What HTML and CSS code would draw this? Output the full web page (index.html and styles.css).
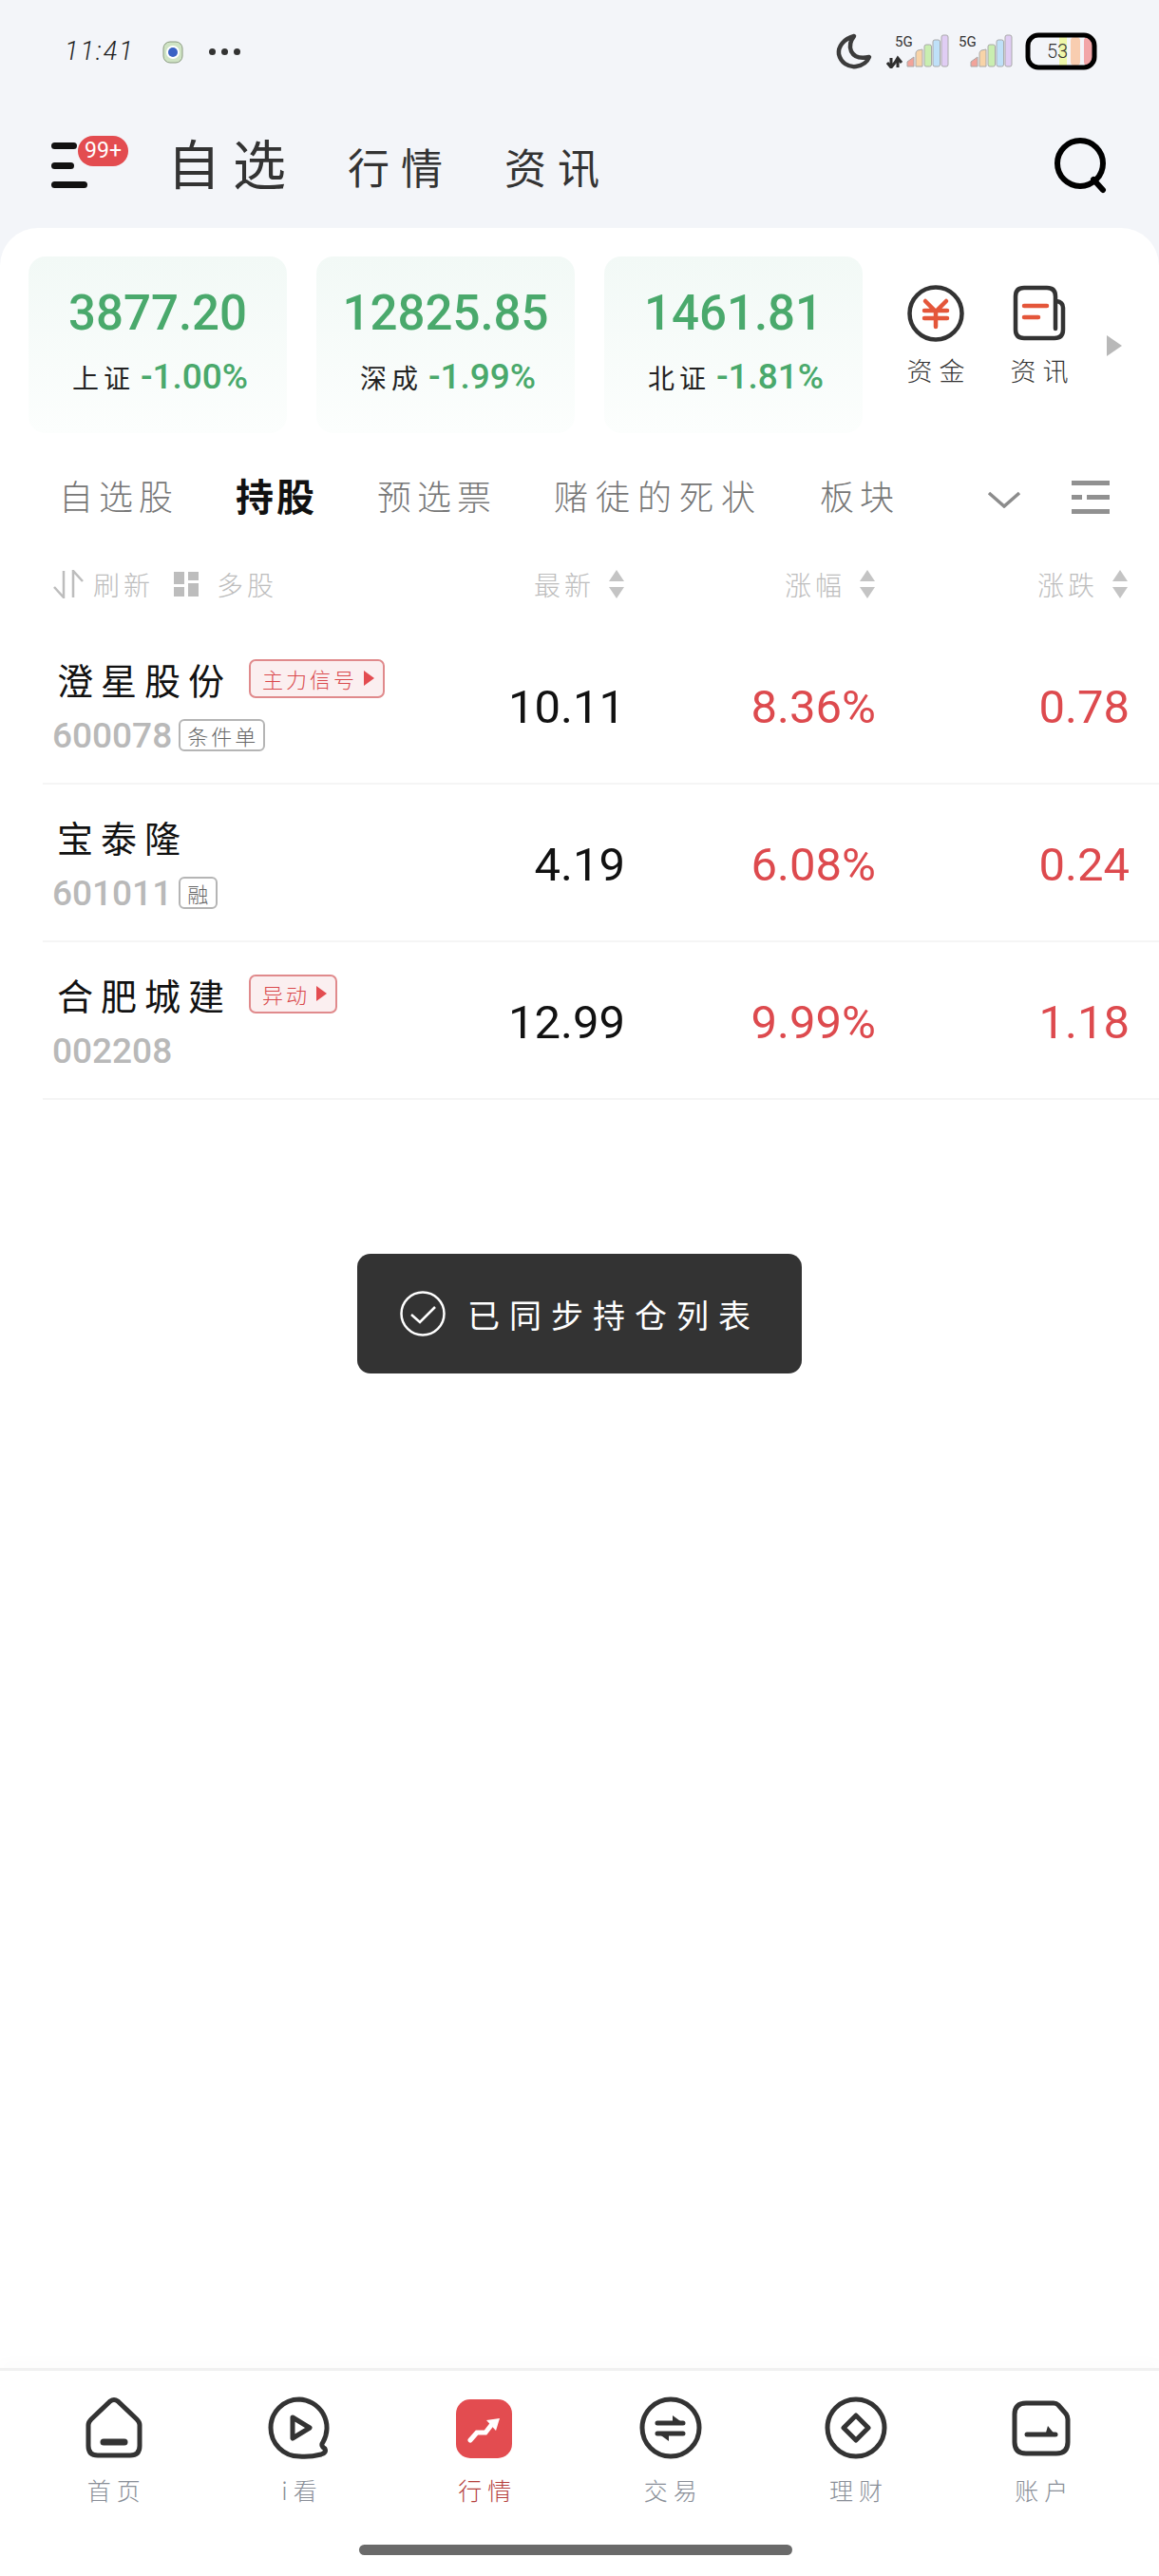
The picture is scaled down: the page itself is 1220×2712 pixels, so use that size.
FILE: index.html
```html
<!DOCTYPE html>
<html lang="zh-CN">
<head>
  <meta charset="UTF-8" />
  <meta name="viewport" content="width=device-width, initial-scale=1.0"/>
  <title>行情</title>
  <link rel="stylesheet" href="styles.css">
</head>
<body>

  <svg class="defs" width="0" height="0">
    <symbol id="sort" viewBox="0 0 18 30">
      <path d="M9 0 L17 12 H1 Z M1 18 H17 L9 30 Z" fill="#c4c4c4"/>
    </symbol>
    <symbol id="bars" viewBox="0 0 45 35">
      <g stroke="#a9a9a9" stroke-width="1">
        <path d="M1 34 V29 L8 24 V34 Z" fill="#f2a39a"/>
        <path d="M10 34 V20 Q10 18 12 17 L17 16 V34 Z" fill="#f8d4a8"/>
        <rect x="19" y="11" width="7.500" height="23" rx="2" fill="#c9eeb0"/>
        <rect x="28" y="6" width="7.500" height="28" rx="2" fill="#bfe0f8"/>
        <rect x="37" y="1" width="7" height="33" rx="2" fill="#e0cdf4"/>
      </g>
    </symbol>
  </svg>

  <div class="status">
    <span class="time">11:41</span>
    <svg class="app-dot" width="24" height="26" viewBox="0 0 24 26">
      <rect x="2" y="3" width="20" height="22" rx="7" fill="#cfe3c4" stroke="#8a9a80"/>
      <circle cx="12" cy="14" r="7" fill="#fff"/>
      <circle cx="12" cy="14" r="5" fill="#3a62c4"/>
    </svg>
    <span class="dots"><i></i><i></i><i></i></span>
    <div class="status-right">
      <svg width="40" height="40" viewBox="0 0 40 40">
        <path d="M20 4 C9 7 3 15 4 23 C6 32 14 37 22 36 C29 35 34 31 36 26 C27 28 20 26 17 20 C15 15 16 9 20 4 Z" fill="none" stroke="#3c3c3c" stroke-width="4.500" stroke-linejoin="round"/>
      </svg>
      <svg class="signal" width="66" height="36" viewBox="0 0 66 36">
        <text x="9" y="13" class="net">5G</text>
        <path d="M5 25 V35 M1 30 L5 35 L9 30 M12 35 V25 M9 30 L12 25 L16 30" stroke="#2f2f2f" stroke-width="3" fill="none"/>
        <use href="#bars" x="21" y="0" width="45" height="35"/>
      </svg>
      <svg class="signal" width="57" height="36" viewBox="0 0 57 36">
        <text x="0" y="13" class="net">5G</text>
        <use href="#bars" x="12" y="0" width="45" height="35"/>
      </svg>
      <svg class="battery" width="76" height="40" viewBox="0 0 76 40">
        <rect x="36" y="5" width="8" height="30" fill="#eef7a8"/>
        <rect x="48" y="5" width="10" height="30" rx="4" fill="#f8cdb0"/>
        <rect x="62" y="5" width="10" height="30" rx="4" fill="#f2a6a8"/>
        <text x="23" y="27" class="level">53</text>
        <rect x="3" y="3" width="70" height="34" rx="11" fill="none" stroke="#000" stroke-width="5"/>
      </svg>
    </div>
  </div>

  <div class="header">
    <div class="menu">
      <i class="menu-a"></i><i class="menu-b"></i><i class="menu-c"></i>
      <span class="badge">99+</span>
    </div>
    <span class="title active">自选</span>
    <span class="title">行情</span>
    <span class="title">资讯</span>
    <svg class="search" width="60" height="60" viewBox="0 0 60 60">
      <circle cx="29" cy="28" r="24" fill="none" stroke="#000" stroke-width="6"/>
      <path d="M43 45 L53 56" stroke="#000" stroke-width="6" stroke-linecap="round"/>
    </svg>
  </div>

  <div class="sheet">
    <div class="index-row">
      <div class="index-card">
        <div class="index-num">3877.20</div>
        <div class="index-chg"><span>上证</span>-1.00%</div>
      </div>
      <div class="index-card">
        <div class="index-num">12825.85</div>
        <div class="index-chg"><span>深成</span>-1.99%</div>
      </div>
      <div class="index-card">
        <div class="index-num">1461.81</div>
        <div class="index-chg"><span>北证</span>-1.81%</div>
      </div>
      <div class="shortcut first">
        <svg width="60" height="60" viewBox="0 0 60 60">
          <circle cx="30" cy="30" r="27.500" fill="none" stroke="#333" stroke-width="4.500"/>
          <path d="M19 17 L30 28 L41 17 M18 27 H42 M18 35 H42 M30 28 V44" fill="none" stroke="#e4563a" stroke-width="4.500" stroke-linecap="round"/>
        </svg>
        <span>资金</span>
      </div>
      <div class="shortcut">
        <svg width="56" height="60" viewBox="0 0 56 60">
          <path d="M45 46 V12 Q45 3 36 3 H12 Q3 3 3 12 V47 Q3 56 12 56 H44 Q53 56 53 47 V24 Q53 18 46 17" fill="none" stroke="#333" stroke-width="4.500" stroke-linecap="round"/>
          <path d="M12 22 H36 M12 34 H27" stroke="#e4563a" stroke-width="4.500" stroke-linecap="round"/>
        </svg>
        <span>资讯</span>
      </div>
      <i class="more-arrow"></i>
    </div>

    <div class="tabs">
      <span class="tab">自选股</span>
      <span class="tab current">持股</span>
      <span class="tab">预选票</span>
      <span class="tab long">赌徒的死状</span>
      <span class="tab">板块</span>
      <svg class="chevron" width="36" height="18" viewBox="0 0 36 18">
        <path d="M2 2 L18 16 L34 2" fill="none" stroke="#8c8c8c" stroke-width="3.500"/>
      </svg>
      <div class="tab-list"><i></i><i class="split"></i><i></i></div>
    </div>

    <div class="table-head">
      <div class="head-tools">
        <svg width="34" height="30" viewBox="0 0 34 30">
          <path d="M12 1 V29 L2 18 M22 29 V1 L32 12" fill="none" stroke="#bdbdbd" stroke-width="2.500"/>
        </svg>
        <span class="head-refresh">刷新</span>
        <svg class="head-grid" width="28" height="28" viewBox="0 0 28 28">
          <path d="M1 1 H12 V14 H1 Z M16 1 H27 V10 H16 Z M1 17 H12 V27 H1 Z M16 13 H27 V27 H16 Z" fill="#bdbdbd"/>
        </svg>
        <span>多股</span>
      </div>
      <div class="head-col">最新<svg width="18" height="30"><use href="#sort"/></svg></div>
      <div class="head-col">涨幅<svg width="18" height="30"><use href="#sort"/></svg></div>
      <div class="head-col">涨跌<svg width="18" height="30"><use href="#sort"/></svg></div>
    </div>

    <div class="stock">
      <div class="stock-info">
        <div class="stock-name">澄星股份<span class="signal-tag">主力信号</span></div>
        <div class="stock-code">600078<span class="code-tag">条件单</span></div>
      </div>
      <div class="val">10.11</div>
      <div class="val up">8.36%</div>
      <div class="val up">0.78</div>
    </div>
    <div class="stock">
      <div class="stock-info">
        <div class="stock-name">宝泰隆</div>
        <div class="stock-code">601011<span class="code-tag">融</span></div>
      </div>
      <div class="val">4.19</div>
      <div class="val up">6.08%</div>
      <div class="val up">0.24</div>
    </div>
    <div class="stock">
      <div class="stock-info">
        <div class="stock-name">合肥城建<span class="signal-tag">异动</span></div>
        <div class="stock-code">002208</div>
      </div>
      <div class="val">12.99</div>
      <div class="val up">9.99%</div>
      <div class="val up">1.18</div>
    </div>

    <div class="toast">
      <svg width="48" height="48" viewBox="0 0 48 48">
        <circle cx="24" cy="24" r="22.500" fill="none" stroke="#fff" stroke-width="2.500"/>
        <path d="M12 25 L21 33 L37 17" fill="none" stroke="#fff" stroke-width="2.500"/>
      </svg>
      <span>已同步持仓列表</span>
    </div>
  </div>

  <div class="tabbar">
    <div class="nav-items">
      <div class="nav-item">
        <svg width="60" height="64" viewBox="0 0 60 64">
          <path d="M3 29 Q3 26 6 23 L26 4 Q30 1 34 4 L54 23 Q57 26 57 29 V51 Q57 61 47 61 H13 Q3 61 3 51 Z" fill="none" stroke="#333" stroke-width="5"/>
          <path d="M19 47 H41" stroke="#333" stroke-width="7" stroke-linecap="round"/>
        </svg>
        <span>首页</span>
      </div>
      <div class="nav-item">
        <svg width="66" height="66" viewBox="0 0 66 66">
          <path d="M33 3 A30 30 0 0 1 58 48 Q55 52 60 55 Q62 59 56 61 Q44 64 33 63 A30 30 0 0 1 33 3 Z" fill="none" stroke="#333" stroke-width="5"/>
          <path d="M26 22 L44 33 L26 44 Z" fill="none" stroke="#333" stroke-width="5" stroke-linejoin="round"/>
        </svg>
        <span>i看</span>
      </div>
      <div class="nav-item active">
        <svg width="60" height="64" viewBox="0 0 60 64">
          <rect x="0" y="2" width="59" height="62" rx="15" fill="#e34c50"/>
          <path d="M15 45 L22 37 H31 L38 28" fill="none" stroke="#fff" stroke-width="5" stroke-linecap="round"/>
          <path d="M32 24 L46 22 L42 35 Z" fill="#fff"/>
        </svg>
        <span>行情</span>
      </div>
      <div class="nav-item">
        <svg width="66" height="66" viewBox="0 0 66 66">
          <circle cx="33" cy="33" r="30" fill="none" stroke="#333" stroke-width="5"/>
          <path d="M19 28 H46 M19 39 H46" stroke="#333" stroke-width="5" stroke-linecap="round"/>
          <path d="M35 20 L46 28 H35 Z M20 39 H31 V47 Z" fill="#333"/>
        </svg>
        <span>交易</span>
      </div>
      <div class="nav-item">
        <svg width="66" height="66" viewBox="0 0 66 66">
          <circle cx="33" cy="33" r="30" fill="none" stroke="#333" stroke-width="5"/>
          <path d="M33 20 L46 33 L33 46 L20 33 Z" fill="none" stroke="#333" stroke-width="5" stroke-linejoin="round"/>
        </svg>
        <span>理财</span>
      </div>
      <div class="nav-item">
        <svg width="62" height="64" viewBox="0 0 62 64">
          <path d="M15 6 H44 Q47 6 49 8 L56 16 Q59 19 59 23 V47 Q59 59 47 59 H15 Q3 59 3 47 V18 Q3 6 15 6 Z" fill="none" stroke="#333" stroke-width="5"/>
          <path d="M16 39 H46" stroke="#333" stroke-width="5" stroke-linecap="round"/>
          <path d="M36 37 L38 30 L47 41 H36 Z" fill="#333"/>
        </svg>
        <span>账户</span>
      </div>
    </div>
    <div class="home-bar"></div>
  </div>

</body>
</html>
```

FILE: styles.css
```css
* {
  box-sizing: border-box;
}

body {
  margin: 0;
  width: 1220px;
  height: 2712px;
  overflow: hidden;
  display: flex;
  flex-direction: column;
  background: #f3f5f9;
  font-family: Roboto, 'Noto Sans CJK SC', sans-serif;
  color: #111;
}

.defs {
  position: absolute;
}

/* status bar */
.status {
  height: 108px;
  display: flex;
  align-items: center;
  padding: 0 65px 0 68px;
}

.time {
  font-size: 27px;
  font-weight: 300;
  font-style: italic;
  letter-spacing: 2px;
  color: #222;
}

.app-dot {
  margin-left: 28px;
}

.dots {
  display: flex;
  gap: 6px;
  margin-left: 26px;
}

.dots i {
  width: 7px;
  height: 7px;
  border-radius: 50%;
  background: #333;
}

.status-right {
  margin-left: auto;
  display: flex;
  align-items: center;
}

.signal {
  margin-left: 14px;
}

.signal + .signal {
  margin-left: 10px;
}

.battery {
  margin-left: 13px;
}

.net {
  font-family: Roboto, sans-serif;
  font-size: 15px;
  fill: #333;
}

.level {
  font-family: Roboto, sans-serif;
  font-size: 20px;
  font-weight: 300;
  fill: #333;
}

/* top header */
.header {
  height: 132px;
  display: flex;
  align-items: center;
  padding: 0 52px 0 54px;
}

.menu {
  position: relative;
  width: 92px;
  height: 48px;
  margin-right: 30px;
  display: flex;
  flex-direction: column;
  justify-content: space-between;
}

.menu i {
  display: block;
  height: 7px;
  border-radius: 4px;
  background: #111;
}

.menu-a {
  width: 27px;
}

.menu-b {
  width: 24px;
}

.menu-c {
  width: 38px;
}

.badge {
  position: absolute;
  left: 28px;
  top: -7px;
  width: 53px;
  height: 32px;
  border-radius: 16px;
  background: #e34c50;
  color: #fff;
  font-size: 23px;
  line-height: 32px;
  text-align: center;
}

.title {
  font-family: 'Noto Sans CJK SC', sans-serif;
  font-size: 44px;
  font-weight: 400;
  letter-spacing: 12px;
  color: #333;
  margin-right: 53px;
  position: relative;
  top: 1px;
}

.title.active {
  font-size: 56px;
  letter-spacing: 13px;
  margin-right: 52px;
  top: -5px;
}

.search {
  margin-left: auto;
}

/* white sheet under the header */
.sheet {
  position: relative;
  flex: 1;
  background: #fff;
  border-radius: 40px 40px 0 0;
  padding-top: 30px;
}

.index-row {
  display: flex;
  align-items: flex-start;
  padding-left: 30px;
  height: 186px;
}

.index-card {
  width: 272px;
  height: 186px;
  margin-right: 31px;
  padding-top: 34px;
  border-radius: 18px;
  background: linear-gradient(180deg, #f2f9f6, #fcfefd);
  text-align: center;
}

.index-num {
  font-size: 51px;
  font-weight: 500;
  line-height: 52px;
  color: #4aa96c;
}

.index-chg {
  margin-top: 22px;
  padding-left: 5px;
  font-size: 37px;
  font-weight: 500;
  line-height: 38px;
  color: #4aa96c;
}

.index-chg span {
  font-family: 'Noto Sans CJK SC', sans-serif;
  font-size: 28px;
  font-weight: 400;
  letter-spacing: 5px;
  color: #222;
  margin-right: 6px;
}

.shortcut {
  width: 80px;
  padding-top: 30px;
  margin-right: 29px;
  display: flex;
  flex-direction: column;
  align-items: center;
}

.shortcut.first {
  margin-left: 6px;
}

.shortcut span {
  font-family: 'Noto Sans CJK SC', sans-serif;
  margin-top: 13px;
  font-size: 27px;
  line-height: 34px;
  font-weight: 300;
  letter-spacing: 7px;
  margin-right: -7px;
  color: #333;
  white-space: nowrap;
}

.more-arrow {
  align-self: center;
  margin-left: 2px;
  margin-top: 2px;
  width: 0;
  height: 0;
  border-left: 16px solid #b8b8b8;
  border-top: 11px solid transparent;
  border-bottom: 11px solid transparent;
}

/* group tabs */
.tabs {
  display: flex;
  align-items: center;
  height: 50px;
  margin-top: 40px;
  padding: 0 52px 0 62px;
  gap: 60px;
}

.tab {
  font-family: 'Noto Sans CJK SC', sans-serif;
  font-size: 36px;
  font-weight: 300;
  letter-spacing: 6px;
  color: #777;
  white-space: nowrap;
}

.tab.long {
  letter-spacing: 8px;
}

.tab.current {
  font-size: 40px;
  font-weight: 700;
  letter-spacing: 3px;
  margin-right: 3px;
  color: #111;
}

.chevron {
  margin-left: auto;
  margin-top: 10px;
}

.tab-list {
  width: 40px;
  margin-left: -7px;
  margin-top: 5px;
  display: flex;
  flex-direction: column;
  gap: 10px;
}

.tab-list i {
  height: 5px;
  background: #919191;
}

.tab-list .split {
  background: linear-gradient(90deg, #919191 11px, transparent 11px, transparent 16px, #919191 16px);
}

/* list columns: name, latest, percent, change */
.table-head {
  display: grid;
  grid-template-columns: 398px 260px 264px 266px;
  height: 50px;
  margin: 44px 0 20px;
  align-items: center;
  font-family: 'Noto Sans CJK SC', sans-serif;
  font-size: 28px;
  font-weight: 300;
  color: #bdbdbd;
}

.head-tools {
  display: flex;
  align-items: center;
  padding-left: 55px;
  letter-spacing: 4px;
}

.head-refresh {
  margin-left: 9px;
}

.head-grid {
  margin: 0 18px 0 20px;
}

.head-col {
  display: flex;
  justify-content: flex-end;
  align-items: center;
  gap: 14px;
  letter-spacing: 4px;
}

.stock {
  display: grid;
  grid-template-columns: 353px 260px 264px 267px;
  align-items: center;
  height: 166px;
  margin-left: 45px;
  padding-right: 31px;
  border-bottom: 2px solid #f5f5f5;
}

.stock-info {
  padding-left: 10px;
  white-space: nowrap;
}

.stock-name {
  display: flex;
  align-items: center;
  height: 44px;
  padding-left: 5px;
  font-family: 'Noto Sans CJK SC', sans-serif;
  font-size: 38px;
  letter-spacing: 8px;
  color: #111;
}

.signal-tag {
  display: flex;
  align-items: center;
  height: 41px;
  margin-left: 18px;
  padding: 0 9px 0 12px;
  border: 2px solid #e08a8c;
  border-radius: 7px;
  background: #fbeff0;
  font-size: 22px;
  font-weight: 300;
  letter-spacing: 3px;
  color: #d9494c;
}

.signal-tag::after {
  content: '';
  margin-left: 7px;
  border-left: 11px solid #e34c50;
  border-top: 8px solid transparent;
  border-bottom: 8px solid transparent;
}

.stock-code {
  display: flex;
  align-items: center;
  height: 36px;
  margin-top: 20px;
  font-size: 37px;
  font-weight: 500;
  color: #b9b9b9;
}

.code-tag {
  display: flex;
  align-items: center;
  height: 34px;
  margin-left: 7px;
  padding: 0 5px 0 7px;
  border: 2px solid #b5b5b5;
  border-radius: 6px;
  font-family: 'Noto Sans CJK SC', sans-serif;
  font-size: 22px;
  font-weight: 300;
  letter-spacing: 3px;
  color: #666;
}

.val {
  padding-top: 5px;
  text-align: right;
  font-size: 49px;
  color: #111;
}

.val.up {
  color: #dd4a4e;
}

.toast {
  position: absolute;
  left: 376px;
  top: 1080px;
  width: 468px;
  height: 126px;
  padding-left: 45px;
  display: flex;
  align-items: center;
  gap: 23px;
  border-radius: 14px;
  background: #333;
  color: #fff;
  font-family: 'Noto Sans CJK SC', sans-serif;
  font-size: 34px;
  font-weight: 400;
  letter-spacing: 10px;
  white-space: nowrap;
}

/* bottom navigation */
.tabbar {
  height: 219px;
  flex-shrink: 0;
  background: #fff;
  border-top: 3px solid #f0f0f0;
  box-shadow: 0 -10px 12px rgba(0, 0, 0, 0.012);
  position: relative;
}

.nav-items {
  display: flex;
  padding: 27px 26px 0 22px;
}

.nav-item {
  flex: 1;
  display: flex;
  flex-direction: column;
  align-items: center;
}

.nav-item svg {
  height: 66px;
}

.nav-item span {
  margin-top: 18px;
  font-family: 'Noto Sans CJK SC', sans-serif;
  font-size: 25px;
  line-height: 28px;
  font-weight: 300;
  letter-spacing: 6px;
  margin-right: -6px;
  color: #8a8f98;
}

.nav-item.active span {
  color: #b5403d;
}

.home-bar {
  width: 456px;
  height: 11px;
  margin: 44px 0 0 378px;
  border-radius: 6px;
  background: #6a6a6a;
}
```
